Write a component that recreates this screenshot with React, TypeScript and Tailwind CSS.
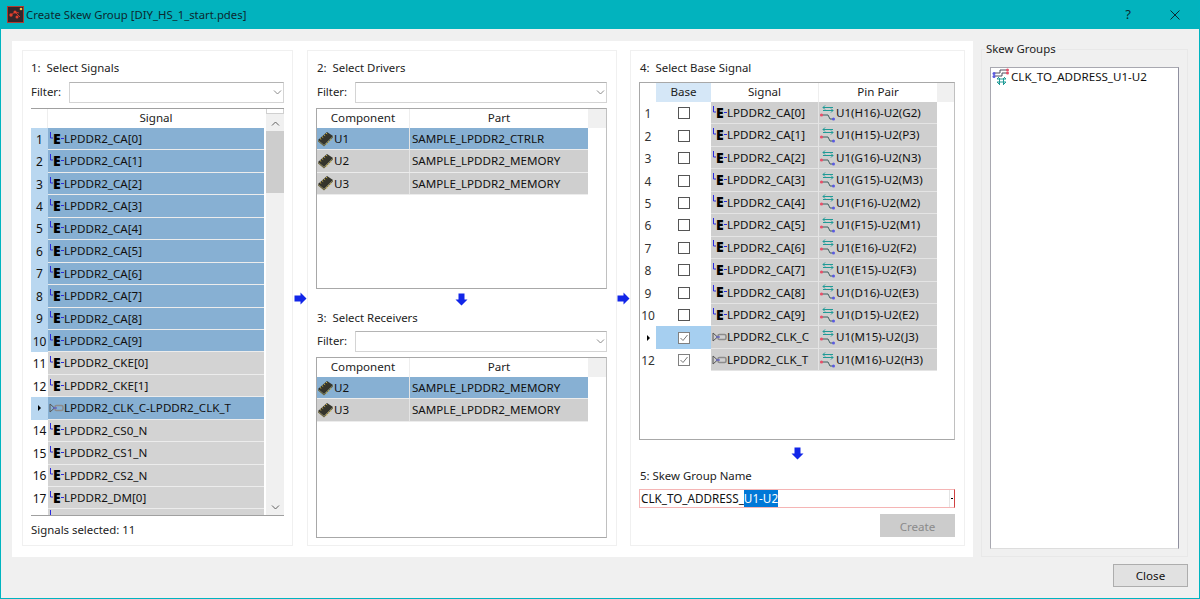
const font = { fontFamily: '"Noto Sans", "Open Sans", sans-serif' };

const signals = [
  "LPDDR2_CA[0]",
  "LPDDR2_CA[1]",
  "LPDDR2_CA[2]",
  "LPDDR2_CA[3]",
  "LPDDR2_CA[4]",
  "LPDDR2_CA[5]",
  "LPDDR2_CA[6]",
  "LPDDR2_CA[7]",
  "LPDDR2_CA[8]",
  "LPDDR2_CA[9]",
  "LPDDR2_CKE[0]",
  "LPDDR2_CKE[1]",
  "LPDDR2_CLK_C-LPDDR2_CLK_T",
  "LPDDR2_CS0_N",
  "LPDDR2_CS1_N",
  "LPDDR2_CS2_N",
  "LPDDR2_DM[0]",
];

const baseRows = [
  ["LPDDR2_CA[0]", "U1(H16)-U2(G2)"],
  ["LPDDR2_CA[1]", "U1(H15)-U2(P3)"],
  ["LPDDR2_CA[2]", "U1(G16)-U2(N3)"],
  ["LPDDR2_CA[3]", "U1(G15)-U2(M3)"],
  ["LPDDR2_CA[4]", "U1(F16)-U2(M2)"],
  ["LPDDR2_CA[5]", "U1(F15)-U2(M1)"],
  ["LPDDR2_CA[6]", "U1(E16)-U2(F2)"],
  ["LPDDR2_CA[7]", "U1(E15)-U2(F3)"],
  ["LPDDR2_CA[8]", "U1(D16)-U2(E3)"],
  ["LPDDR2_CA[9]", "U1(D15)-U2(E2)"],
  ["LPDDR2_CLK_C", "U1(M15)-U2(J3)"],
  ["LPDDR2_CLK_T", "U1(M16)-U2(H3)"],
];

function SignalIcon() {
  return (
    <span className="flex w-[16px] h-[16px] shrink-0 items-start">
      <svg width="5" height="16" viewBox="0 0 5 16" className="shrink-0">
        <path d="M2.5 1v6H5" fill="none" stroke="#2a2ae0" strokeWidth="1" />
      </svg>
      <span className="w-[8px] h-[16px] leading-[16px] text-[14px] font-black text-black">E</span>
      <span className="w-[3px] h-[1px] mt-[7px] bg-[#2a2ae0]" />
    </span>
  );
}

function DiffIcon() {
  return (
    <svg width="16" height="16" viewBox="0 0 16 16" className="shrink-0">
      <path d="M2 4v8l4.5-4z" fill="none" stroke="#555" strokeWidth="1" />
      <rect x="7" y="5.5" width="8" height="5" rx="1.5" fill="none" stroke="#8c8c8c" strokeWidth="1.6" />
      <path d="M5 8h4" stroke="#4a4ad0" strokeWidth="1" />
    </svg>
  );
}

function ChipIcon() {
  return (
    <svg width="17" height="16" viewBox="0 0 17 16" className="shrink-0">
      <path d="M1 9 10 1l6 4-9 9z" fill="#34342c" />
      <path d="M1 9l6 5v1.5L1 10.5zM7 14l9-9v1.5l-9 9z" fill="#6d6740" />
      <path d="M3 7.5l1.2.8M5 5.7l1.2.8M7 3.9l1.2.8M9 2.2l1.2.8M9 12.5l1.2.8M11 10.5l1.2.8M13 8.5l1.2.8" stroke="#d0b54a" strokeWidth="1" />
    </svg>
  );
}

function PinPairIcon() {
  return (
    <svg width="16" height="16" viewBox="0 0 16 16" className="shrink-0">
      <path d="M4 2.5h10M4 2.5l2-2M4 2.5l2 2M4 5.5h10M14 5.5l-2-2M14 5.5l-2 2" fill="none" stroke="#1f9a96" strokeWidth="1" />
      <path d="M3 10h6l2 4h4" fill="none" stroke="#3f5f60" strokeWidth="1" />
      <circle cx="2.5" cy="10" r="1.6" fill="#e8506a" />
      <circle cx="14.5" cy="14" r="1.5" fill="#5a5ae0" />
    </svg>
  );
}

function SkewIcon() {
  return (
    <svg width="18" height="18" viewBox="0 0 18 18" className="shrink-0">
      <path d="M2 5h6V2h7" fill="none" stroke="#4f4f5f" strokeWidth="1" />
      <path d="M2 8h8V5h5" fill="none" stroke="#4f4f5f" strokeWidth="1" />
      <circle cx="15.5" cy="2" r="1.5" fill="#e8506a" />
      <circle cx="15.5" cy="5" r="1.5" fill="#e8506a" />
      <circle cx="2" cy="5.5" r="1.5" fill="#5a5ae0" />
      <circle cx="2" cy="8.5" r="1.5" fill="#5a5ae0" />
      <path d="M5 11h9M5 11l2-2M14 11l-2-2M5 14h9M5 14l2 2M14 14l-2 2M7.5 10v7M11.5 10v7" fill="none" stroke="#1f9a96" strokeWidth="1" />
    </svg>
  );
}

function AppIcon() {
  return (
    <svg width="17" height="17" viewBox="0 0 17 17" className="shrink-0">
      <rect x="0.5" y="0.5" width="16" height="16" fill="#33262a" stroke="#b03a30" />
      <path d="M4 9l4-3 5 5M8 6l4 1" fill="none" stroke="#c8382c" strokeWidth="1" />
      <circle cx="4" cy="9" r="1.7" fill="#e0402e" />
      <circle cx="8" cy="6" r="1.5" fill="#e0402e" />
      <circle cx="10" cy="11" r="1.5" fill="#e0402e" />
      <circle cx="14" cy="3" r="1.3" fill="#f0c040" />
    </svg>
  );
}

function BlueArrow({ down }: { down?: boolean }) {
  return (
    <svg width="13" height="13" viewBox="0 0 13 13" style={down ? { transform: "rotate(90deg)" } : undefined}>
      <path d="M0.5 3.5h6V0.5L12.5 6.5l-6 6v-3h-6z" fill="#1226e8" />
    </svg>
  );
}

function Chevron({ up, color = "#606060" }: { up?: boolean; color?: string }) {
  return (
    <svg width="9" height="5" viewBox="0 0 9 5">
      <path d={up ? "M1 4.5l3.5-3.5L8 4.5" : "M1 .5L4.5 4 8 .5"} fill="none" stroke={color} strokeWidth="1" />
    </svg>
  );
}

function Filter({ labelW, pad }: { labelW: string; pad?: boolean }) {
  return (
    <div className={`flex items-center h-[21px] text-[11.4px] text-[#222] ${pad ? "pl-[1px]" : ""}`}>
      <span className={`${labelW} pb-[2px]`}>Filter:</span>
      <div className="flex-1 h-[21px] bg-white border border-[#d4d4d4] border-t-[#b4b4b4] flex items-center justify-end pr-[1px]">
        <Chevron color="#8a8a8a" />
      </div>
    </div>
  );
}

function CheckBox({ on }: { on?: boolean }) {
  return (
    <span className={`w-[12px] h-[12px] bg-white border flex items-center justify-center ${on ? "border-[#808080]" : "border-[#555]"}`}>
      {on && (
        <svg width="10" height="10" viewBox="0 0 10 10">
          <path d="M1.5 5l2.5 2.5 4.5-5.5" fill="none" stroke="#777" strokeWidth="1" />
        </svg>
      )}
    </span>
  );
}

function PartTable({ rows, className }: { rows: { c: string; p: string; sel?: boolean }[]; className: string }) {
  return (
    <div className={`bg-white border border-[#a8a8a8] border-r-[#c0c0c0] ${className}`}>
      <div className="flex h-[19px] text-[11.6px] text-[#222] leading-[18px] text-center">
        <div className="w-[93px] border-r border-[#eeeeee]">Component</div>
        <div className="w-[178px]">Part</div>
        <div className="flex-1 bg-[#f0f0f0]" />
      </div>
      {rows.map((r) => (
        <div key={r.c} className={`flex w-[271px] h-[22.4px] items-center border-b border-[#ececec] text-[11.6px] text-[#111] ${r.sel ? "bg-[#87b0d3]" : "bg-[#cfcfcf]"}`}>
          <div className="w-[93px] flex items-center border-r border-[#e4e4e4] h-full">
            <ChipIcon />
            <span>{r.c}</span>
          </div>
          <div className="pl-[2px]">{r.p}</div>
        </div>
      ))}
    </div>
  );
}

function Scrollbar() {
  return (
    <div className="w-[18px] bg-[#f0f0f0] flex flex-col items-center shrink-0 ml-[1px]">
      <div className="h-[22px] w-full flex flex-col items-center">
        <div className="h-[5px] w-full bg-white border-b border-x border-[#d0d0d0]" />
        <div className="mt-[7px]">
          <Chevron up />
        </div>
      </div>
      <div className="h-[62px] w-full bg-[#cdcdcd]" />
      <div className="flex-1" />
      <div className="h-[16px] flex items-center">
        <Chevron />
      </div>
    </div>
  );
}

export default function App() {
  return (
    <div style={font} className="w-[1200px] h-[599px] flex flex-col bg-[#f0f0f0] border-x border-b border-[#00b4c0] overflow-hidden">
      {/* title bar */}
      <div className="h-[29px] -mx-[1px] bg-[#02b3be] flex items-center shrink-0 pl-[7px] text-[11.35px] text-[#0c2a30]">
        <AppIcon />
        <span className="ml-[2px]">Create Skew Group [DIY_HS_1_start.pdes]</span>
        <span className="ml-auto text-[13px] mr-[39px]">?</span>
        <svg width="10" height="10" viewBox="0 0 10 10" className="mr-[20px]">
          <path d="M.5 .5l9 9M9.5 .5l-9 9" stroke="#0c2a30" strokeWidth="1" />
        </svg>
      </div>

      <div className="flex flex-1 pl-[11px] pr-[11px] pt-[12px] items-start">
        {/* main white panel */}
        <div className="w-[961px] h-[516px] bg-white flex pl-[10px] pt-[9px]">
          {/* 1 */}
          <div className="w-[271px] h-[496px] border border-[#f0f0f0] flex flex-col pl-[8px] pr-[8px] pt-[10px]">
            <div className="h-[15px] leading-[14px] text-[11.4px] text-[#222]">1:&nbsp; Select Signals</div>
            <div className="mt-[6px]">
              <Filter labelW="w-[38px]" />
            </div>
            <div className="mt-[5px] h-[408px] border-t border-[#a0a0a0] border-b border-b-[#a0a0a0] flex overflow-hidden">
              <div className="w-[233px] shrink-0">
                <div className="flex h-[19px] text-[11.6px] text-[#222] leading-[18px] text-center">
                  <div className="w-[17px] border-r border-[#eeeeee]" />
                  <div className="flex-1">Signal</div>
                </div>
                {signals.map((s, i) => {
                  const sel = i < 10 || i === 12;
                  const cur = i === 12;
                  return (
                    <div key={i} className="flex h-[22.44px] text-[11.6px] text-[#111]">
                      <div className={`w-[17px] flex items-center justify-center text-[12px] ${cur ? "" : "pt-[1px]"} ${sel ? "bg-[#b9d7f0]" : "bg-white"}`}>
                        {cur ? <span className="w-0 h-0 border-y-[3px] border-y-transparent border-l-[3px] border-l-black" /> : i + 1}
                      </div>
                      <div className={`flex-1 flex items-center border-b border-[#ececec] ${sel ? "bg-[#87b0d3]" : "bg-[#d3d3d3]"}`}>
                        {cur ? <DiffIcon /> : <SignalIcon />}
                        <span>{s}</span>
                      </div>
                    </div>
                  );
                })}
                {/* next row, only its top shows */}
                <div className="flex h-[22.44px]">
                  <div className="w-[17px] bg-white" />
                  <div className="flex-1 bg-[#d3d3d3] pl-[2px] pt-[1px]">
                    <div className="w-[1px] h-[5px] bg-[#2a2ae0]" />
                  </div>
                </div>
              </div>
              <div className="w-[1px]" />
              <Scrollbar />
            </div>
            <div className="mt-[7px] h-[15px] leading-[14px] text-[11.4px] text-[#222]">Signals selected: 11</div>
          </div>

          {/* arrow */}
          <div className="w-[14px] h-[496px] flex items-center justify-center">
            <BlueArrow />
          </div>

          {/* 2 & 3 */}
          <div className="w-[310px] h-[496px] border border-[#f0f0f0] flex flex-col pl-[8px] pr-[9px] pt-[10px]">
            <div className="pl-[1px] h-[15px] leading-[14px] text-[11.4px] text-[#222]">2:&nbsp; Select Drivers</div>
            <div className="mt-[6px]">
              <Filter labelW="w-[38px]" pad />
            </div>
            <PartTable
              className="mt-[5px] h-[181px]"
              rows={[
                { c: "U1", p: "SAMPLE_LPDDR2_CTRLR", sel: true },
                { c: "U2", p: "SAMPLE_LPDDR2_MEMORY" },
                { c: "U3", p: "SAMPLE_LPDDR2_MEMORY" },
              ]}
            />
            <div className="h-[22px] flex items-center justify-center pb-[1px]">
              <BlueArrow down />
            </div>
            <div className="pl-[1px] h-[15px] leading-[14px] text-[11.4px] text-[#222]">3:&nbsp; Select Receivers</div>
            <div className="mt-[5px]">
              <Filter labelW="w-[38px]" pad />
            </div>
            <PartTable
              className="mt-[5px] h-[181px]"
              rows={[
                { c: "U2", p: "SAMPLE_LPDDR2_MEMORY", sel: true },
                { c: "U3", p: "SAMPLE_LPDDR2_MEMORY" },
              ]}
            />
          </div>

          {/* arrow */}
          <div className="w-[13px] h-[496px] flex items-center justify-center">
            <BlueArrow />
          </div>

          {/* 4 */}
          <div className="w-[335px] h-[496px] border border-[#f0f0f0] flex flex-col pl-[8px] pr-[9px] pt-[10px]">
            <div className="pl-[1px] h-[15px] leading-[14px] text-[11.4px] text-[#222]">4:&nbsp; Select Base Signal</div>
            <div className="mt-[6px] h-[358px] bg-white border border-[#a8a8a8] border-r-[#c0c0c0]">
              <div className="flex h-[19px] text-[11.6px] text-[#222] leading-[18px] text-center">
                <div className="w-[16px]" />
                <div className="w-[55px] bg-[#d5e7f7]">Base</div>
                <div className="w-[108px] border-r border-[#eeeeee]">Signal</div>
                <div className="w-[118px]">Pin Pair</div>
                <div className="flex-1 bg-[#f0f0f0]" />
              </div>
              {baseRows.map(([s, p], i) => {
                const cur = i === 10;
                return (
                  <div key={s} className="flex h-[22.45px] text-[11.6px] text-[#111]">
                    <div className={`w-[16px] flex items-center justify-center text-[12px] text-[#333] ${cur ? "" : "pt-[2px]"}`}>
                      {cur ? <span className="w-0 h-0 border-y-[3px] border-y-transparent border-l-[3px] border-l-black" /> : i + 1}
                    </div>
                    <div className={`w-[55px] flex items-center justify-center ${cur ? "bg-[#a6cff0]" : ""}`}>
                      <CheckBox on={i >= 10} />
                    </div>
                    <div className="w-[108px] flex items-center bg-[#cfcfcf] border-r border-b border-[#e4e4e4]">
                      {i >= 10 ? <DiffIcon /> : <SignalIcon />}
                      <span>{s}</span>
                    </div>
                    <div className="w-[118px] flex items-center bg-[#cfcfcf] border-b border-[#e4e4e4]">
                      <PinPairIcon />
                      <span className="ml-[1px]">{p}</span>
                    </div>
                  </div>
                );
              })}
            </div>
            <div className="h-[28px] flex items-center justify-center pb-[2px]">
              <BlueArrow down />
            </div>
            <div className="pl-[1px] h-[15px] leading-[14px] text-[11.4px] text-[#222] mt-[1px]">5: Skew Group Name</div>
            <div className="mt-[5px] h-[19px] border border-[#f5b5b5] border-r-[#d04040] flex items-center text-[11.7px] text-[#111] leading-[17px] pl-[1px]">
              <span>CLK_TO_ADDRESS_</span>
              <span className="bg-[#0078d7] text-white">U1-U2</span>
              <span className="ml-auto w-[5px] h-full border-l border-[#e4e4e4] flex items-center justify-center">
                <span className="w-[2px] h-[1px] bg-black" />
              </span>
            </div>
            <div className="mt-[6px] self-end w-[75px] h-[23px] bg-[#cccccc] flex items-center justify-center pt-[2px] text-[11.6px] text-[#8a8a8a]">Create</div>
          </div>
        </div>

        {/* skew groups */}
        <div className="ml-[8px] w-[207px] h-[508px] mt-[8px] border border-[#e8e8e8] relative px-[8px] pt-[17px] pb-[7px]">
          <span className="absolute left-[3px] -top-[8px] bg-[#f0f0f0] px-[1px] h-[14px] leading-[14px] text-[11.4px] text-[#222]">Skew Groups</span>
          <div className="h-full bg-white border border-[#a8a8b0] border-b-[#dddddd] border-r-[#8f8f9f] flex items-start pl-[1px] text-[11.6px] text-[#111]">
            <div className="flex items-center h-[18px]">
              <SkewIcon />
              <span className="ml-[1px]">CLK_TO_ADDRESS_U1-U2</span>
            </div>
          </div>
        </div>
      </div>

      {/* footer */}
      <div className="h-[34px] shrink-0 flex justify-end pr-[11px]">
        <button className="w-[75px] h-[23px] bg-[#e1e1e1] border border-[#adadad] text-[11.6px] text-[#111]">Close</button>
      </div>
    </div>
  );
}
